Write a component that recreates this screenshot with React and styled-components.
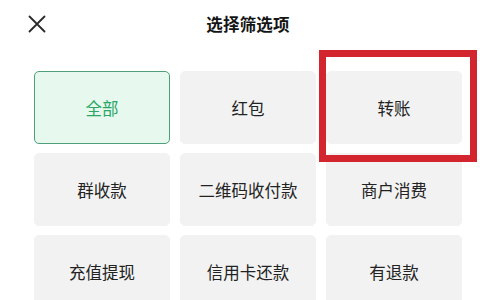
import React from "react";
import styled, { createGlobalStyle } from "styled-components";

const Global = createGlobalStyle`
  html, body { margin: 0; padding: 0; background: #ffffff; }
  body { font-family: "Noto Sans CJK SC", "Noto Sans", sans-serif; }
`;

const Page = styled.div`
  position: relative;
  width: 480px;
  height: 300px;
  overflow: hidden;
  background: #ffffff;
`;

const Header = styled.div`
  display: grid;
  grid-template-columns: 74px 1fr 58px;
  align-items: center;
  height: 46px;
  padding-top: 1px;
`;

const CloseButton = styled.button`
  display: flex;
  align-items: center;
  justify-content: flex-start;
  border: 0;
  background: none;
  padding: 0 0 0 28px;
  width: 74px;
  height: 46px;
  cursor: pointer;
`;

const Title = styled.div`
  text-align: center;
  font-size: 16.5px;
  font-weight: 700;
  color: #141414;
  letter-spacing: 0.2px;
`;

const Grid = styled.div`
  display: grid;
  grid-template-columns: repeat(3, 136px);
  grid-auto-rows: 73px;
  column-gap: 10px;
  row-gap: 9px;
  padding: 24px 0 0 34px;
`;

const Option = styled.div`
  display: flex;
  align-items: center;
  justify-content: center;
  box-sizing: border-box;
  border-radius: 5px;
  font-size: 16.5px;
  font-weight: 400;
  background: ${(p) => (p.$active ? "#e7f9ee" : "#f2f2f2")};
  color: ${(p) => (p.$active ? "#2aa567" : "#222222")};
  border: 1px solid ${(p) => (p.$active ? "#4e9f7a" : "#f2f2f2")};
`;

const Highlight = styled.div`
  position: absolute;
  left: 319px;
  top: 50px;
  width: 158px;
  height: 112px;
  box-sizing: border-box;
  border: 7px solid #d2252e;
  pointer-events: none;
`;

const options = [
  "全部",
  "红包",
  "转账",
  "群收款",
  "二维码收付款",
  "商户消费",
  "充值提现",
  "信用卡还款",
  "有退款",
];

export default function App() {
  return (
    <Page>
      <Global />
      <Header>
        <CloseButton aria-label="关闭">
          <svg width="18" height="18" viewBox="0 0 18 18">
            <path d="M1.5 1.5 L16.5 16.5 M16.5 1.5 L1.5 16.5" stroke="#2a2a2a" strokeWidth="1.8" strokeLinecap="round" />
          </svg>
        </CloseButton>
        <Title>选择筛选项</Title>
        <div />
      </Header>
      <Grid>
        {options.map((o, i) => (
          <Option key={o} $active={i === 0}>
            {o}
          </Option>
        ))}
      </Grid>
      <Highlight />
    </Page>
  );
}
